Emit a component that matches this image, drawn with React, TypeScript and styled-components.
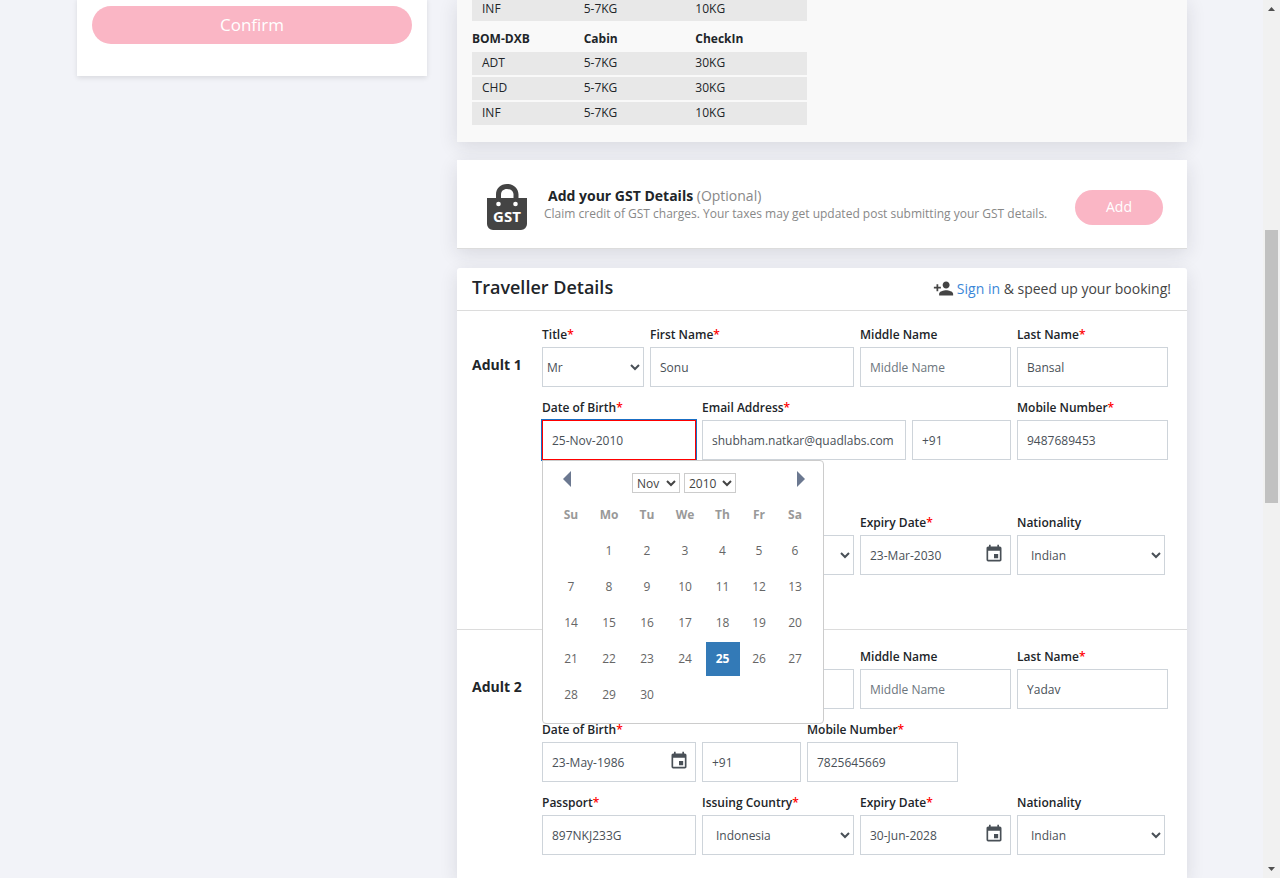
import React, { useId } from "react";
import styled, { createGlobalStyle } from "styled-components";
import { MdEvent, MdPersonAdd } from "react-icons/md";

const GlobalStyle = createGlobalStyle`
  *, *::before, *::after { box-sizing: border-box; }
  body {
    margin: 0;
    background: #f2f3f8;
    color: #212529;
    font-family: "Open Sans", "Noto Sans", sans-serif;
    font-size: 12px;
    line-height: 18px;
  }
  button, input, select { font: inherit; margin: 0; }
`;

const Shell = styled.div`
  display: flex;
  height: 100vh;
  overflow: hidden;
`;

const Viewport = styled.div`
  flex: 1;
  min-width: 0;
  overflow: hidden;
`;

const Page = styled.div`
  display: grid;
  grid-template-columns: 350px minmax(0, 1fr);
  gap: 30px;
  max-width: 1139px;
  min-height: 100vh;
  margin: -2px auto 0;
  padding: 0 14px 0 15px;
`;

const Summary = styled.aside`
  align-self: start;
  padding: 8px 15px 32px;
  background: #fff;
  box-shadow: 0 2px 5px rgba(0, 0, 0, 0.1);
`;

const PinkButton = styled.button<{ $wide?: boolean }>`
  display: block;
  width: ${(p) => (p.$wide ? "100%" : "88px")};
  height: ${(p) => (p.$wide ? "38px" : "35px")};
  padding: 0;
  border: 0;
  border-radius: 19px;
  background: #fab6c5;
  color: #fff;
  font-size: ${(p) => (p.$wide ? "17px" : "14px")};
  cursor: pointer;
`;

const Main = styled.main`
  display: flex;
  flex-direction: column;
  gap: 18px;
`;

const Card = styled.section`
  background: #fff;
  box-shadow: 0 5px 18px rgba(30, 30, 50, 0.12);
`;

const BaggageCard = styled(Card)`
  padding: 0 15px 15px;
  background: #f9f9f9;
`;

const BaggageTable = styled.table`
  width: 335px;
  table-layout: fixed;
  border-collapse: separate;
  border-spacing: 0;
  text-align: left;

  th {
    height: 29px;
    padding: 2px 0 0;
    font-weight: 700;
  }
  td {
    height: 25px;
    padding: 0 0 2px;
    border-bottom: 2px solid #f9f9f9;
    background: #e8e8e8;
  }
  td:first-child { padding-left: 10px; }
`;

const GstCard = styled(Card)`
  display: flex;
  align-items: center;
  height: 89px;
  padding: 6px 24px 0 30px;
  border-bottom: 1px solid #dcdcdc;
`;

const GstText = styled.div`
  flex: 1;
  padding: 0 0 4px 17px;
`;

const GstTitle = styled.h2`
  margin: 0;
  padding-left: 4px;
  font-size: 14px;
  line-height: 18px;
  font-weight: 700;

  span { color: #888; font-weight: 400; }
`;

const GstNote = styled.p`
  margin: 0;
  color: #888;
`;

const TravellerCard = styled(Card)`
  flex: 1;
  margin-top: 1px;
  border-radius: 3px 3px 0 0;
`;

const TravellerHeader = styled.header`
  display: flex;
  align-items: center;
  justify-content: space-between;
  height: 43px;
  padding: 0 16px 4px 15px;
  border-bottom: 1px solid #dcdcdc;
`;

const TravellerTitle = styled.h2`
  margin: 0;
  font-size: 18px;
  line-height: 24px;
  font-weight: 600;
`;

const SignIn = styled.p`
  display: flex;
  align-items: center;
  gap: 3px;
  margin: 0;
  padding-top: 3px;
  color: #444;
  font-size: 14px;

  a { color: #3b87d8; text-decoration: none; }
`;

const Traveller = styled.section<{ $first?: boolean }>`
  display: grid;
  grid-template-columns: 70px minmax(0, 1fr);
  padding: ${(p) => (p.$first ? "15px 19px 54px 15px" : "18px 19px 23px 15px")};
  border-bottom: ${(p) => (p.$first ? "1px solid #dcdcdc" : "0")};
`;

const TravellerName = styled.h3`
  margin: 30px 0 0;
  font-size: 14px;
  line-height: 18px;
  font-weight: 700;
`;

const Rows = styled.div`
  display: grid;
  gap: 12px;
`;

const Row = styled.div<{ $cols: string; $below?: boolean }>`
  display: grid;
  grid-template-columns: ${(p) => p.$cols};
  gap: 6px;
  padding-bottom: ${(p) => (p.$below ? "42px" : "0")};
`;

const Field = styled.div<{ $inset?: boolean }>`
  position: relative;
  min-width: 0;
  padding-right: ${(p) => (p.$inset ? "3px" : "0")};
`;

const LabelSlot = styled.div`
  height: 21px;
  white-space: nowrap;
`;

const Label = styled.label`
  color: #212529;
  font-weight: 600;
`;

const Required = styled.span`
  color: #f00;
`;

const TextInput = styled.input<{ $active?: boolean }>`
  display: block;
  width: 100%;
  height: 40px;
  padding: 0 9px;
  border: 1px solid ${(p) => (p.$active ? "#f00" : "#ced4da")};
  border-radius: 0;
  outline: ${(p) => (p.$active ? "1px solid #1a6fc4" : "none")};
  background: #fff;
  color: #495057;

  &::placeholder { color: #6c757d; opacity: 1; }
`;

const SelectBox = styled.select<{ $tight?: boolean }>`
  display: block;
  width: 100%;
  height: 40px;
  padding: 0 0 0 ${(p) => (p.$tight ? "0" : "9px")};
  border: 1px solid #ced4da;
  border-radius: 0;
  background: #fff;
  color: #495057;
`;

const DateIcon = styled(MdEvent)`
  position: absolute;
  right: 7px;
  bottom: 11px;
  color: #495057;
  pointer-events: none;
`;

const Popup = styled.div`
  position: absolute;
  top: 100%;
  left: 0;
  z-index: 2;
  width: 282px;
  padding: 0 8px 9px;
  border: 1px solid #ccc;
  border-radius: 0 4px 4px 4px;
  background: #fff;
`;

const PopupHeader = styled.div`
  display: flex;
  justify-content: space-between;
  height: 35px;
  padding: 0 9px 0 11px;
`;

const ArrowButton = styled.button`
  width: 10px;
  height: 36px;
  padding: 0;
  border: 0;
  background: none;
  color: #6b7890;
  line-height: 0;
`;

const Pickers = styled.div`
  display: flex;
  gap: 4px;
  padding-top: 12px;
`;

const SmallSelect = styled.select<{ $year?: boolean }>`
  width: ${(p) => (p.$year ? "52px" : "48px")};
  height: 20px;
  padding: 0;
  border: 1px solid #ccc;
  border-radius: 0;
  background: #fff;
  color: #444;
`;

const Days = styled.table`
  table-layout: fixed;
  width: 263px;
  border-collapse: separate;
  border-spacing: 2px;
  text-align: center;

  th, td { height: 34px; padding: 0; }
  th { color: #999; font-weight: 700; }
`;

const DayCol = styled.col<{ $width: number }>`
  width: ${(p) => p.$width}px;
`;

const Day = styled.button<{ $selected?: boolean }>`
  display: block;
  width: 34px;
  height: 34px;
  margin: 0 auto;
  padding: 0;
  border: 0;
  background: ${(p) => (p.$selected ? "#337ab7" : "none")};
  color: ${(p) => (p.$selected ? "#fff" : "#666")};
  font-weight: ${(p) => (p.$selected ? 700 : 400)};
`;

const ScrollTrack = styled.div`
  display: flex;
  flex-direction: column;
  align-items: center;
  justify-content: space-between;
  width: 17px;
  background: #f1f1f1;
`;

const ScrollRail = styled.div`
  flex: 1;
  display: grid;
  grid-template-rows: 213fr 273fr 358fr;
`;

const ScrollThumb = styled.div`
  grid-row: 2;
  width: 13px;
  background: #c1c1c1;
`;

const ScrollArrow = ({ down }: { down?: boolean }) => (
  <svg width="17" height="17" viewBox="0 0 17 17" aria-hidden="true">
    <path d={down ? "M5 6h7l-3.5 4z" : "M5 11h7l-3.5-4z"} fill="#505050" />
  </svg>
);

const GstIcon = () => (
  <svg width="40" height="46" viewBox="0 0 40 46" aria-hidden="true">
    <path
      fill="#444"
      d="M0 14h9v-3.500C9 4.500 13.500 0 20 0s11.500 4.500 11.500 10.500V14H40v26a6 6 0 0 1-6 6H6a6 6 0 0 1-6-6z"
    />
    <path fill="#fff" d="M14 14v-3.500C14 7.300 16.300 5 20 5s6.500 2.300 6.500 5.500V14z" />
    <circle cx="11.500" cy="20" r="2.300" fill="#fff" />
    <circle cx="28.500" cy="20" r="2.300" fill="#fff" />
    <text x="20" y="38" textAnchor="middle" fill="#fff" fontSize="15" fontWeight="700">
      GST
    </text>
  </svg>
);

type FieldProps = {
  label?: string;
  name?: string;
  required?: boolean;
  value?: string;
  placeholder?: string;
  kind?: "text" | "date" | "select";
  tight?: boolean;
  inset?: boolean;
  active?: boolean;
  children?: React.ReactNode;
};

function FormField({ label, name, required, value = "", placeholder, kind = "text", tight, inset, active, children }: FieldProps) {
  const id = useId();
  return (
    <Field $inset={inset}>
      <LabelSlot>
        {label && (
          <Label htmlFor={id}>
            {label}
            {required && <Required>*</Required>}
          </Label>
        )}
      </LabelSlot>
      {kind === "select" ? (
        <SelectBox id={id} aria-label={name} $tight={tight} defaultValue={value}>
          <option>{value}</option>
        </SelectBox>
      ) : (
        <TextInput id={id} aria-label={name} $active={active} defaultValue={value} placeholder={placeholder} />
      )}
      {kind === "date" && <DateIcon size={20} />}
      {children}
    </Field>
  );
}

const weekdays = ["Su", "Mo", "Tu", "We", "Th", "Fr", "Sa"];
const dayWidths = [36, 36, 36, 36, 35, 34, 34];
const weeks = [0, 1, 2, 3, 4].map((w) => weekdays.map((_, d) => w * 7 + d));

function Calendar() {
  return (
    <Popup>
      <PopupHeader>
        <ArrowButton type="button" aria-label="Previous month">
          <svg width="10" height="16" viewBox="0 0 10 16"><path d="M9 0v16L1 8z" fill="currentColor" /></svg>
        </ArrowButton>
        <Pickers>
          <SmallSelect aria-label="Month" defaultValue="Nov"><option>Nov</option></SmallSelect>
          <SmallSelect $year aria-label="Year" defaultValue="2010"><option>2010</option></SmallSelect>
        </Pickers>
        <ArrowButton type="button" aria-label="Next month">
          <svg width="10" height="16" viewBox="0 0 10 16"><path d="M1 0v16l8-8z" fill="currentColor" /></svg>
        </ArrowButton>
      </PopupHeader>
      <Days>
        <colgroup>
          {weekdays.map((d, i) => <DayCol key={d} $width={dayWidths[i]} />)}
        </colgroup>
        <thead>
          <tr>{weekdays.map((d) => <th key={d} scope="col">{d}</th>)}</tr>
        </thead>
        <tbody>
          {weeks.map((week) => (
            <tr key={week[0]}>
              {week.map((day) => (
                <td key={day}>
                  {day > 0 && day < 31 && <Day type="button" $selected={day === 25}>{day}</Day>}
                </td>
              ))}
            </tr>
          ))}
        </tbody>
      </Days>
    </Popup>
  );
}

const nameCols = "102fr 204fr 151fr 151fr";
const contactCols = "154fr 204fr 99fr 151fr";
const shortContactCols = "154fr 99fr 151fr 204fr";
const passportCols = "154fr 152fr 151fr 151fr";

const allowances = [
  ["ADT", "5-7KG", "30KG"],
  ["CHD", "5-7KG", "30KG"],
  ["INF", "5-7KG", "10KG"],
];

export default function App() {
  return (
    <Shell>
      <GlobalStyle />
      <Viewport>
        <Page>
          <Summary>
            <PinkButton type="button" $wide>Confirm</PinkButton>
          </Summary>
          <Main>
            <BaggageCard>
              <BaggageTable>
                <tbody>
                  <tr><td>INF</td><td>5-7KG</td><td>10KG</td></tr>
                  <tr>
                    <th scope="col">BOM-DXB</th>
                    <th scope="col">Cabin</th>
                    <th scope="col">CheckIn</th>
                  </tr>
                  {allowances.map((row) => (
                    <tr key={row[0]}>{row.map((cell, i) => <td key={i}>{cell}</td>)}</tr>
                  ))}
                </tbody>
              </BaggageTable>
            </BaggageCard>

            <GstCard>
              <GstIcon />
              <GstText>
                <GstTitle>Add your GST Details <span>(Optional)</span></GstTitle>
                <GstNote>Claim credit of GST charges. Your taxes may get updated post submitting your GST details.</GstNote>
              </GstText>
              <PinkButton type="button">Add</PinkButton>
            </GstCard>

            <TravellerCard>
              <TravellerHeader>
                <TravellerTitle>Traveller Details</TravellerTitle>
                <SignIn>
                  <MdPersonAdd size={21} />
                  <span><a href="#signin">Sign in</a> &amp; speed up your booking!</span>
                </SignIn>
              </TravellerHeader>

              <Traveller $first>
                <TravellerName>Adult 1</TravellerName>
                <Rows>
                  <Row $cols={nameCols}>
                    <FormField label="Title" required kind="select" tight value="Mr" />
                    <FormField label="First Name" required value="Sonu" />
                    <FormField label="Middle Name" placeholder="Middle Name" />
                    <FormField label="Last Name" required value="Bansal" />
                  </Row>
                  <Row $cols={contactCols} $below>
                    <FormField label="Date of Birth" required value="25-Nov-2010" active>
                      <Calendar />
                    </FormField>
                    <FormField label="Email Address" required value="shubham.natkar@quadlabs.com" />
                    <FormField name="Country code" value="+91" />
                    <FormField label="Mobile Number" required value="9487689453" />
                  </Row>
                  <Row $cols={passportCols}>
                    <FormField name="Passport" />
                    <FormField name="Issuing country" kind="select" />
                    <FormField label="Expiry Date" required kind="date" value="23-Mar-2030" />
                    <FormField label="Nationality" kind="select" inset value="Indian" />
                  </Row>
                </Rows>
              </Traveller>

              <Traveller>
                <TravellerName>Adult 2</TravellerName>
                <Rows>
                  <Row $cols={nameCols}>
                    <FormField name="Title" kind="select" tight />
                    <FormField name="First name" />
                    <FormField label="Middle Name" placeholder="Middle Name" />
                    <FormField label="Last Name" required value="Yadav" />
                  </Row>
                  <Row $cols={shortContactCols}>
                    <FormField label="Date of Birth" required kind="date" value="23-May-1986" />
                    <FormField name="Country code" value="+91" />
                    <FormField label="Mobile Number" required value="7825645669" />
                  </Row>
                  <Row $cols={passportCols}>
                    <FormField label="Passport" required value="897NKJ233G" />
                    <FormField label="Issuing Country" required kind="select" value="Indonesia" />
                    <FormField label="Expiry Date" required kind="date" value="30-Jun-2028" />
                    <FormField label="Nationality" kind="select" inset value="Indian" />
                  </Row>
                </Rows>
              </Traveller>
            </TravellerCard>
          </Main>
        </Page>
      </Viewport>
      <ScrollTrack aria-hidden="true">
        <ScrollArrow />
        <ScrollRail><ScrollThumb /></ScrollRail>
        <ScrollArrow down />
      </ScrollTrack>
    </Shell>
  );
}
